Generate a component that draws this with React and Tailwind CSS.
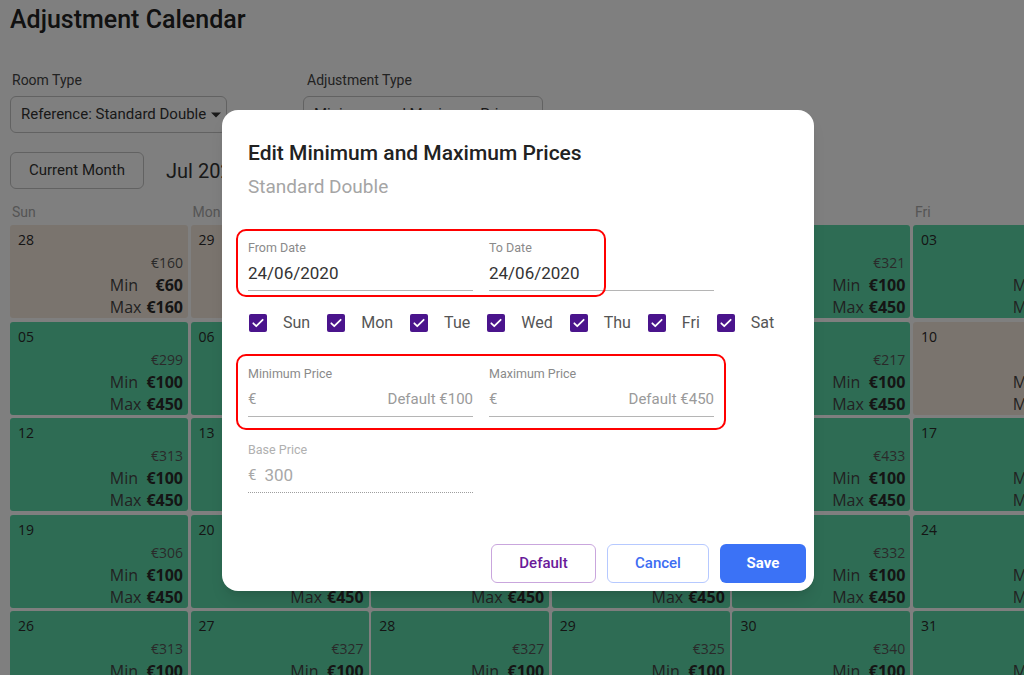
import React from "react";

const G = "bg-[#5cd9a9]";
const B = "bg-[#f5e9dc]";

const rows = [
  [
    { d: "28", p: "€160", min: "€60", max: "€160", b: true },
    { d: "29", p: "€160", min: "€60", max: "€160", b: true },
    { d: "30", p: "€318", min: "€100", max: "€450" },
    { d: "01", p: "€305", min: "€100", max: "€450" },
    { d: "02", p: "€321", min: "€100", max: "€450" },
    { d: "03", p: "€330", min: "€100", max: "€450" },
    { d: "04", p: "€335", min: "€100", max: "€450" },
  ],
  [
    { d: "05", p: "€299", min: "€100", max: "€450" },
    { d: "06", p: "€301", min: "€100", max: "€450" },
    { d: "07", p: "€296", min: "€100", max: "€450" },
    { d: "08", p: "€310", min: "€100", max: "€450" },
    { d: "09", p: "€217", min: "€100", max: "€450" },
    { d: "10", p: "€160", min: "€60", max: "€160", b: true },
    { d: "11", p: "€160", min: "€60", max: "€160", b: true },
  ],
  [
    { d: "12", p: "€313", min: "€100", max: "€450" },
    { d: "13", p: "€309", min: "€100", max: "€450" },
    { d: "14", p: "€312", min: "€100", max: "€450" },
    { d: "15", p: "€318", min: "€100", max: "€450" },
    { d: "16", p: "€433", min: "€100", max: "€450" },
    { d: "17", p: "€340", min: "€100", max: "€450" },
    { d: "18", p: "€342", min: "€100", max: "€450" },
  ],
  [
    { d: "19", p: "€306", min: "€100", max: "€450" },
    { d: "20", p: "€311", min: "€100", max: "€450" },
    { d: "21", p: "€314", min: "€100", max: "€450" },
    { d: "22", p: "€320", min: "€100", max: "€450" },
    { d: "23", p: "€332", min: "€100", max: "€450" },
    { d: "24", p: "€338", min: "€100", max: "€450" },
    { d: "25", p: "€344", min: "€100", max: "€450" },
  ],
  [
    { d: "26", p: "€313", min: "€100", max: "€450" },
    { d: "27", p: "€327", min: "€100", max: "€450" },
    { d: "28", p: "€327", min: "€100", max: "€450" },
    { d: "29", p: "€325", min: "€100", max: "€450" },
    { d: "30", p: "€340", min: "€100", max: "€450" },
    { d: "31", p: "€345", min: "€100", max: "€450" },
    { d: "01", p: "€350", min: "€100", max: "€450" },
  ],
];

function Cell({ c }) {
  return (
    <div
      className={`h-[93px] rounded-[3px] ${c.b ? B : G} flex flex-col justify-between pl-[8px] pr-[5px] pt-[5px] text-[#2a2a2a]`}
      style={{ fontFamily: '"Open Sans", sans-serif' }}
    >
      <div className="text-[14px] leading-[20px] font-medium">{c.d}</div>
      <div className="flex flex-col items-end">
        <div className="text-[14px] leading-[22px] text-[#555]">{c.p}</div>
        <div className="grid grid-cols-[auto_auto] gap-x-[5px] text-[16px] leading-[22px]">
          <span className="text-[#444]">Min</span>
          <span className="font-bold text-right">{c.min}</span>
          <span className="text-[#444]">Max</span>
          <span className="font-bold text-right">{c.max}</span>
        </div>
      </div>
    </div>
  );
}

function Check({ label }) {
  return (
    <div className="flex items-center gap-[16px] h-[24px]">
      <div className="w-[18px] h-[18px] rounded-[2px] bg-[#4a148c] flex items-center justify-center">
        <svg width="14" height="14" viewBox="0 0 24 24" fill="none">
          <path d="M4 12.5l5 5L20 6.5" stroke="white" strokeWidth="3" strokeLinecap="round" strokeLinejoin="round" />
        </svg>
      </div>
      <span className="text-[16px] leading-[24px] text-[#555]">{label}</span>
    </div>
  );
}

function Field({ label, children, right, muted, dotted }) {
  return (
    <div className="w-[225px]">
      <div className={`text-[12.5px] leading-[16px] ${muted ? "text-[#b0b0b0]" : "text-[#8a8a8a]"}`}>{label}</div>
      <div
        className={`mt-[7px] h-[28px] pb-[8px] flex items-start justify-between leading-[20px] border-b ${
          dotted ? "border-dotted border-[#9e9e9e]" : "border-[#b5b5b5]"
        }`}
      >
        {children}
        {right && <span className="text-[15px] text-[#9a9a9a]">{right}</span>}
      </div>
    </div>
  );
}

export default function App() {
  const days = ["Sun", "Mon", "Tue", "Wed", "Thu", "Fri", "Sat"];
  return (
    <div
      className="relative w-[1024px] h-[675px] overflow-hidden bg-white"
      style={{ fontFamily: "Roboto, sans-serif" }}
    >
      <div className="pl-[10px] w-[1300px]">
        <h1 className="text-[25px] leading-[32px] pt-[4px] text-[#222] font-medium">Adjustment Calendar</h1>
        <div className="mt-[34px] flex gap-[78px]">
          <div className="flex flex-col">
            <span className="text-[14px] leading-[20px] text-[#444] pl-[2px]">Room Type</span>
            <div className="mt-[6px] w-[217px] h-[37px] border border-[#c4c4c4] rounded-[6px] flex items-center pl-[10px] text-[15px] text-[#333]">
              Reference: Standard Double
              <svg className="ml-[5px]" width="10" height="6" viewBox="0 0 10 5">
                <path d="M0 0 L10 0 L5 5 Z" fill="#333" />
              </svg>
            </div>
          </div>
          <div className="flex flex-col">
            <span className="text-[14px] leading-[20px] text-[#444] pl-[2px]">Adjustment Type</span>
            <div className="mt-[6px] -ml-[2px] w-[240px] h-[37px] border border-[#c4c4c4] rounded-[6px] flex items-center pl-[10px] text-[15px] text-[#333]">
              Minimum and Maximum Prices
            </div>
          </div>
        </div>
        <div className="mt-[19px] flex items-center gap-[22px]">
          <div className="w-[134px] h-[37px] border border-[#c4c4c4] rounded-[6px] flex items-center justify-center text-[15px] text-[#333]">
            Current Month
          </div>
          <span className="text-[20px] text-[#333]">Jul 2020</span>
        </div>
        <div className="mt-[13px] grid grid-cols-[repeat(7,178px)] gap-x-[2.6px]">
          {days.map((d) => (
            <span key={d} className="text-[14px] leading-[20px] text-[#aaa] pl-[2px]">
              {d}
            </span>
          ))}
        </div>
        <div className="mt-[3px] grid grid-cols-[repeat(7,178px)] gap-x-[2.6px] gap-y-[3.5px]">
          {rows.flat().map((c, i) => (
            <Cell key={i} c={c} />
          ))}
        </div>
      </div>

      <div className="absolute inset-0 bg-black/50" />

      <div className="absolute left-[222px] top-[110px] w-[592px] h-[481px] rounded-[16px] bg-white shadow-lg pl-[26px] pr-[8px] pt-[29px] flex flex-col">
        <div className="text-[21px] leading-[28px] font-medium text-[#222]">Edit Minimum and Maximum Prices</div>
        <div className="mt-[8px] text-[19px] leading-[24px] text-[#a5a5a5]">Standard Double</div>
        <div className="mt-[41px] flex gap-[16px]">
          <Field label="From Date">
            <span className="text-[17px] text-[#333]">24/06/2020</span>
          </Field>
          <Field label="To Date">
            <span className="text-[17px] text-[#333]">24/06/2020</span>
          </Field>
        </div>
        <div className="mt-[20px] flex gap-[17px] pl-[1px]">
          {days.map((d) => (
            <Check key={d} label={d} />
          ))}
        </div>
        <div className="mt-[31px] flex gap-[16px]">
          <Field label="Minimum Price" right="Default €100">
            <span className="text-[15px] text-[#9a9a9a]">€</span>
          </Field>
          <Field label="Maximum Price" right="Default €450">
            <span className="text-[15px] text-[#9a9a9a]">€</span>
          </Field>
        </div>
        <div className="mt-[25px]">
          <Field label="Base Price" muted dotted>
            <span className="flex gap-[8px] text-[#a8a8a8]">
              <span className="text-[15px]">€</span>
              <span className="text-[17px]">300</span>
            </span>
          </Field>
        </div>
        <div className="mt-auto mb-[8px] flex justify-end gap-[11px]">
          <button className="w-[105px] h-[39px] rounded-[6px] border border-[#c9a6dd] text-[#6a1b9a] text-[15px] font-medium">
            Default
          </button>
          <button className="w-[102px] h-[39px] rounded-[6px] border border-[#b6c9ff] text-[#3d6df2] text-[15px] font-medium">
            Cancel
          </button>
          <button className="w-[86px] h-[39px] rounded-[6px] bg-[#3b72f6] text-white text-[15px] font-bold">
            Save
          </button>
        </div>

        <div className="absolute left-[14px] top-[119px] w-[370px] h-[68px] border-2 border-[#ff0000] rounded-[10px] pointer-events-none" />
        <div className="absolute left-[14px] top-[244px] w-[490px] h-[76px] border-2 border-[#ff0000] rounded-[10px] pointer-events-none" />
      </div>
    </div>
  );
}
